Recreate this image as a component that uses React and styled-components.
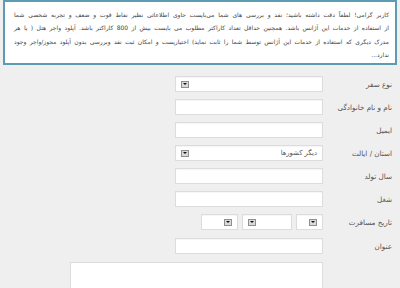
import React from "react";
import styled, { createGlobalStyle } from "styled-components";

const GlobalStyle = createGlobalStyle`
  html, body {
    margin: 0;
    padding: 0;
    background: #efefef;
    overflow: hidden;
  }
  body {
    font-family: "DejaVu Sans", sans-serif;
  }
`;

const Page = styled.div`
  direction: rtl;
  width: 400px;
  height: 288px;
  box-sizing: border-box;
  padding: 0 3px 0 3px;
`;

const Notice = styled.div`
  background: #fff;
  border: 2px solid #5d9bb2;
  height: 65px;
  box-sizing: border-box;
  padding: 6px 6px 0 9px;
  color: #444;
  font-size: 6px;
  line-height: 13.3px;
`;

const Line = styled.div`
  text-align: ${(p) => (p.last ? "right" : "justify")};
  text-align-last: ${(p) => (p.last ? "right" : "justify")};
  white-space: nowrap;
`;

const Form = styled.div`
  display: flex;
  flex-direction: column;
  gap: 7px;
  padding: 11px 5px 0 0;
`;

const Row = styled.div`
  display: grid;
  grid-template-columns: 64px 148px;
  column-gap: 5px;
  align-items: center;
`;

const Label = styled.div`
  font-size: 7.2px;
  color: #555;
  text-align: right;
`;

const Field = styled.div`
  height: 16px;
  box-sizing: border-box;
  background: #fff;
  border: 1px solid #dcdcdc;
  box-shadow: inset 0 1px 1px rgba(0, 0, 0, 0.04);
  display: flex;
  align-items: center;
  justify-content: space-between;
  padding: 0 5px;
  font-size: 6.8px;
  color: #555;
  width: ${(p) => p.w || 148}px;
  flex-direction: ${(p) => (p.arrowRight ? "row-reverse" : "row")};
`;

const Arrow = styled.span`
  width: 8px;
  height: 7px;
  box-sizing: border-box;
  border: 1px solid #8f8f8f;
  background: #dadada;
  display: flex;
  align-items: center;
  justify-content: center;
  &::after {
    content: "";
    border-left: 2px solid transparent;
    border-right: 2px solid transparent;
    border-top: 2px solid #111;
  }
`;

const DateGroup = styled.div`
  display: flex;
  gap: 4px;
  height: 17px;
`;

const Area = styled.div`
  width: 253px;
  height: 40px;
  background: #fff;
  border: 1px solid #dcdcdc;
  box-sizing: border-box;
`;

const AreaRow = styled.div`
  display: grid;
  grid-template-columns: 64px 253px;
  column-gap: 5px;
  padding: 8px 5px 0 0;
`;

const Select = ({ value, w, arrowRight }) => (
  <Field w={w} arrowRight={arrowRight}>
    <span>{value}</span>
    <Arrow />
  </Field>
);

export default function App() {
  return (
    <>
      <GlobalStyle />
      <Page>
        <Notice>
          <Line>
            کاربر گرامی! لطفاً دقت داشته باشید؛ نقد و بررسی های شما می‌بایست حاوی اطلاعاتی نظیر نقاط قوت و ضعف و تجربه شخصی شما
          </Line>
          <Line>
            از استفاده از خدمات این آژانس باشد. همچنین حداقل تعداد کاراکتر مطلوب می بایست بیش از 800 کاراکتر باشد. آپلود واچر هتل ( یا هر
          </Line>
          <Line>
            مدرک دیگری که استفاده از خدمات این آژانس توسط شما را ثابت نماید) اختیاریست و امکان ثبت نقد وبررسی بدون آپلود مجوز/واچر وجود
          </Line>
          <Line last>ندارد...</Line>
        </Notice>
        <Form>
          <Row>
            <Label>نوع سفر</Label>
            <Select value="" />
          </Row>
          <Row>
            <Label>نام و نام خانوادگی</Label>
            <Field />
          </Row>
          <Row>
            <Label>ایمیل</Label>
            <Field />
          </Row>
          <Row>
            <Label>استان / ایالت</Label>
            <Select value="دیگر کشورها" />
          </Row>
          <Row>
            <Label>سال تولد</Label>
            <Field />
          </Row>
          <Row>
            <Label>شغل</Label>
            <Field />
          </Row>
          <Row>
            <Label>تاریخ مسافرت</Label>
            <DateGroup>
              <Select value="" w={27} arrowRight />
              <Select value="" w={50} />
              <Select value="" w={37} arrowRight />
            </DateGroup>
          </Row>
          <Row>
            <Label>عنوان</Label>
            <Field />
          </Row>
        </Form>
        <AreaRow>
          <div />
          <Area />
        </AreaRow>
      </Page>
    </>
  );
}
